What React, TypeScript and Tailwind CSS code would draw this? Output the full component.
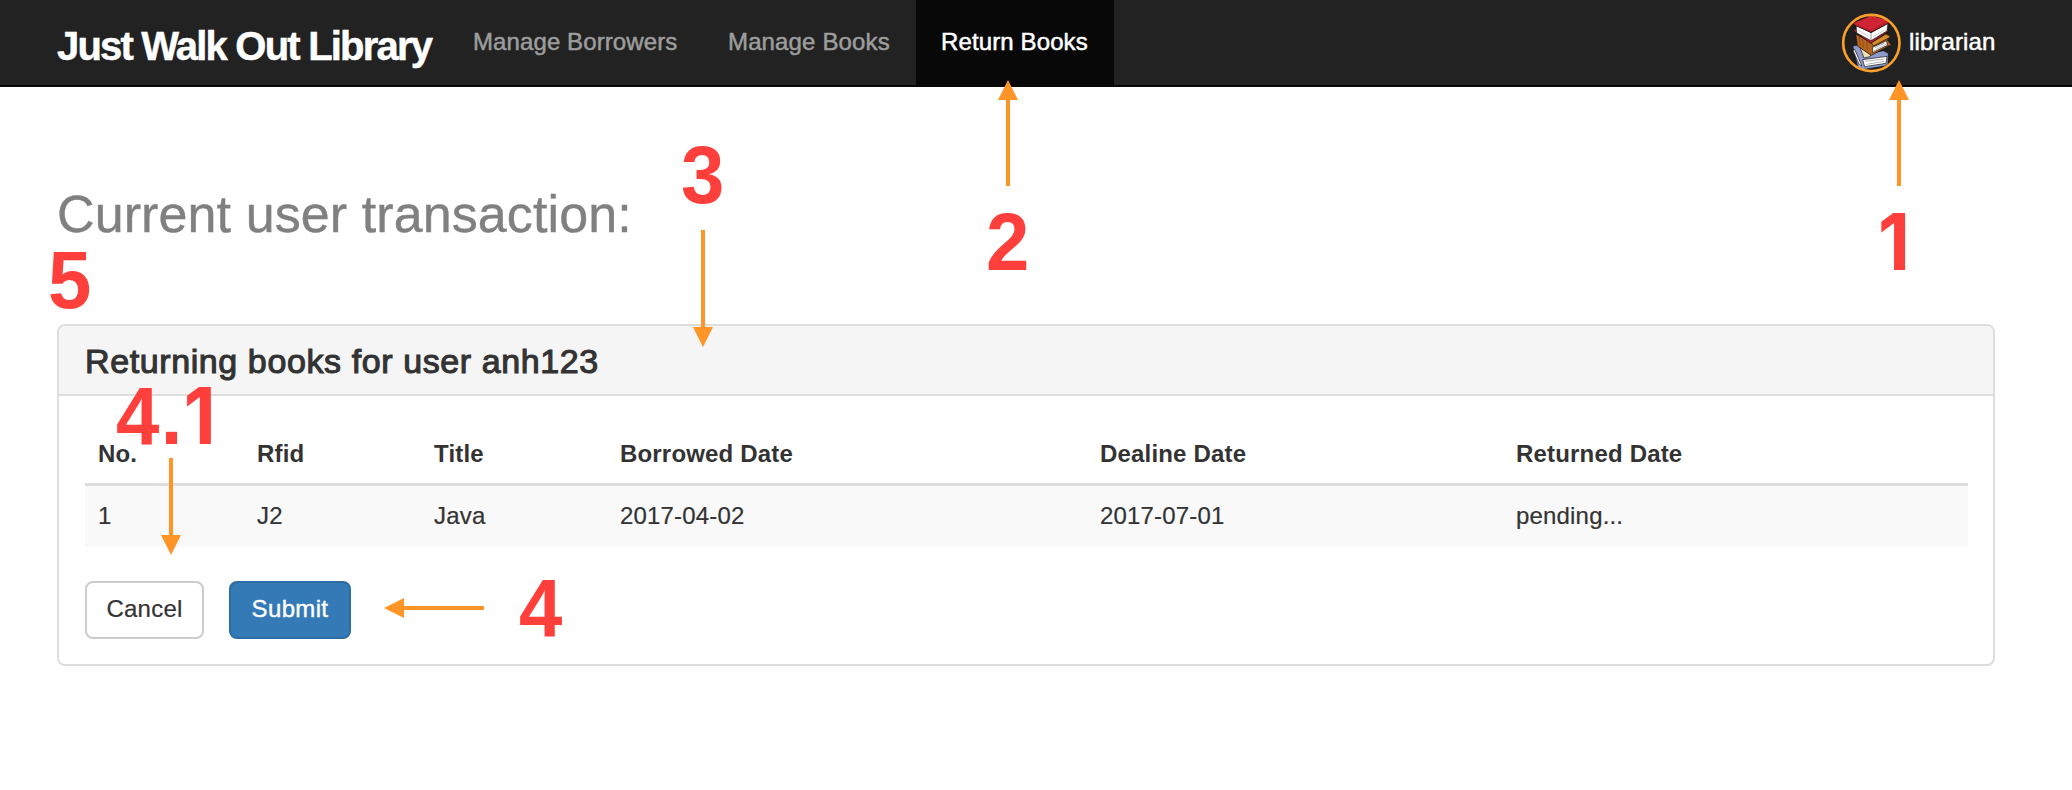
const columns = ['No.', 'Rfid', 'Title', 'Borrowed Date', 'Dealine Date', 'Returned Date'];
const rows = [['1', 'J2', 'Java', '2017-04-02', '2017-07-01', 'pending...']];

function BooksAvatar() {
  return (
    <svg viewBox="0 0 204 198" className="h-[66px] w-[68px]">
      <circle cx="100" cy="99" r="84" fill="#1f1f1f" />
      <g stroke="#0d0d0d" strokeWidth="2" strokeLinejoin="round">
        <path d="M44 108 L56 106 L60 104 L100 130 L136 122 L151 130 L150 162 L140 168 L68 180 L60 174 Z" fill="#8f9bcf" />
        <path d="M66 112 L98 134 L96 140 L78 144 Z" fill="#efe3b0" />
        <path d="M74 149 L147 139 L144 160 L80 170 Z" fill="#ffffff" />
        <path d="M50 118 L72 168 L64 164 L45 122 Z" fill="#ffffff" />
        <path d="M53 72 L100 98 L144 70 L158 78 L148 90 L160 104 L100 136 L58 108 Z" fill="#b5651d" />
        <path d="M100 98 L144 72 L158 81 L106 108 Z" fill="#d98a2b" />
        <path d="M104 112 L146 92 L148 106 L104 128 Z" fill="#ffffff" />
        <path d="M46 62 L54 56 L146 56 L152 63 L98 100 Z" fill="#c41e2c" />
        <path d="M54 46 L99 68 L150 40 L147 63 L99 92 L56 69 Z" fill="#ffffff" />
        <path d="M46 38 L100 16 L152 31 L151 40 L99 67 L48 45 Z" fill="#c41e2c" />
      </g>
      <g fill="none" strokeLinecap="round" strokeWidth="1.5">
        <path d="M56 39 L101 20 L142 32 L99 56 Z" fill="#cf2431" stroke="#d83a45" />
        <path d="M99 70 V90" stroke="#333333" />
        <path d="M106 80 L138 61 M62 62 L92 78" stroke="#999999" />
        <path d="M110 121 L142 104 M112 113 L138 100" stroke="#666666" />
        <path d="M82 154 L138 147 M86 163 L138 154" stroke="#666666" />
        <path d="M64 82 L66 106 M74 88 L76 112 M86 95 L88 120" stroke="#6e3a10" />
      </g>
      <circle cx="100" cy="99" r="84.5" fill="none" stroke="#f9a02b" strokeWidth="8" />
    </svg>
  );
}

function Navbar() {
  return (
    <nav className="flex h-[87px] border-b-2 border-[#080808] bg-[#222] leading-7 text-[#9d9d9d]">
      <a className="w-[447px] pt-6 pl-[57px] text-[40px] leading-[44px] font-bold tracking-[-1.8px] whitespace-nowrap text-white [-webkit-text-stroke:0.5px]">
        Just Walk Out Library
      </a>
      <a className="w-64 pt-7 pl-[26px] tracking-[0.1px] [-webkit-text-stroke:0.5px]">Manage Borrowers</a>
      <a className="w-[213px] pt-7 pl-[25px] tracking-[0.14px] [-webkit-text-stroke:0.5px]">Manage Books</a>
      <a className="w-[198px] bg-[#080808] pt-7 pl-[25px] tracking-[0.12px] text-white [-webkit-text-stroke:0.5px]">
        Return Books
      </a>
      <div className="ml-auto flex w-[234px] text-white">
        <div className="pt-2.5">
          <BooksAvatar />
        </div>
        <a className="pt-7 pl-[3px] tracking-[0.12px] [-webkit-text-stroke:0.5px]">librarian</a>
      </div>
    </nav>
  );
}

function TransactionTable() {
  return (
    <table className="w-full table-fixed border-collapse text-left">
      <colgroup>
        <col className="w-[159px]" />
        <col className="w-[177px]" />
        <col className="w-[186px]" />
        <col className="w-[480px]" />
        <col className="w-[416px]" />
        <col />
      </colgroup>
      <thead>
        <tr className="h-[62px] shadow-[inset_0_-3px_0_#ddd]">
          {columns.map((c) => (
            <th key={c} className="px-[13px] pt-4 pb-[18px] font-bold tracking-[0.18px]">
              {c}
            </th>
          ))}
        </tr>
      </thead>
      <tbody>
        {rows.map((r) => (
          <tr key={r[1]} className="h-[61px] bg-[#f9f9f9]">
            {r.map((v, i) => (
              <td key={i} className="px-[13px] pt-4 pb-[17px] tracking-[0.18px] [-webkit-text-stroke:0.2px]">
                {v}
              </td>
            ))}
          </tr>
        ))}
      </tbody>
    </table>
  );
}

function Arrow({ className, length, turn }: { className: string; length: number; turn: number }) {
  const horizontal = turn === 270;
  const w = horizontal ? length : 20;
  const h = horizontal ? 20 : length;
  const flip = turn === 180 ? `rotate(180 10 ${length / 2})` : horizontal ? 'matrix(0 1 1 0 0 0)' : undefined;
  return (
    <svg width={w} height={h} viewBox={`0 0 ${w} ${h}`} className={className} fill="#ff9427">
      <path d={`M10 0 L20 20 H12 V${length} H8 V20 H0 Z`} transform={flip} />
    </svg>
  );
}

function One() {
  return <span className="font-['Inter'] text-[78px]">1</span>;
}

// Numbered callouts laid over the page
function Annotations() {
  return (
    <div className="text-[82px] leading-[90px] font-bold text-[#ff3f3b]">
      <Arrow className="absolute top-20 left-[1889px]" length={106} turn={0} />
      <Arrow className="absolute top-20 left-[998px]" length={106} turn={0} />
      <Arrow className="absolute top-[230px] left-[693px]" length={117} turn={180} />
      <Arrow className="absolute top-[458px] left-[161px]" length={97} turn={180} />
      <Arrow className="absolute top-[598px] left-[384px]" length={100} turn={270} />
      <span className="absolute top-[197px] left-[1878px] origin-left scale-x-95"><One /></span>
      <span className="absolute top-[197px] left-[986px] origin-left scale-x-95">2</span>
      <span className="absolute top-[130px] left-[681px] origin-left scale-x-95">3</span>
      <span className="absolute top-[563px] left-[519px] origin-left scale-x-95">4</span>
      <span className="absolute top-[371px] left-[116px] origin-left scale-x-95 tracking-[1.5px] whitespace-nowrap">4.<One /></span>
      <span className="absolute top-[235px] left-[48px] origin-left scale-x-95">5</span>
    </div>
  );
}

export default function App() {
  return (
    <div className="relative h-[790px] w-[2072px] overflow-hidden bg-white font-['Liberation_Sans',Arial,sans-serif] text-2xl leading-7 text-[#333]">
      <Navbar />
      <main className="flex flex-col gap-[81px] pt-[98px] pr-[77px] pl-[57px]">
        <h1 className="text-[52px] leading-[58px] tracking-[0.1px] text-[#808080] [-webkit-text-stroke:0.4px]">
          Current user transaction:
        </h1>
        <section className="flex h-[342px] flex-col overflow-hidden rounded-lg border-2 border-[#ddd]">
          <h3 className="h-[70px] border-b-2 border-[#ddd] bg-[#f5f5f5] pt-[15px] pl-[26px] text-[34px] leading-10 tracking-[0.6px] [-webkit-text-stroke:1.1px]">
            Returning books for user anh123
          </h3>
          <div className="flex flex-col gap-[34px] pt-7 pr-[25px] pl-[26px]">
            <TransactionTable />
            <div className="flex gap-[25px]">
              <button className="flex h-[58px] w-[119px] justify-center rounded-lg border-2 border-[#ccc] bg-white pt-3 tracking-[0.22px] [-webkit-text-stroke:0.2px]">
                Cancel
              </button>
              <button className="flex h-[58px] w-[122px] justify-center rounded-lg border-2 border-[#2e6da4] bg-[#337ab7] pt-3 tracking-[0.35px] text-white [-webkit-text-stroke:0.4px]">
                Submit
              </button>
            </div>
          </div>
        </section>
      </main>
      <Annotations />
    </div>
  );
}
